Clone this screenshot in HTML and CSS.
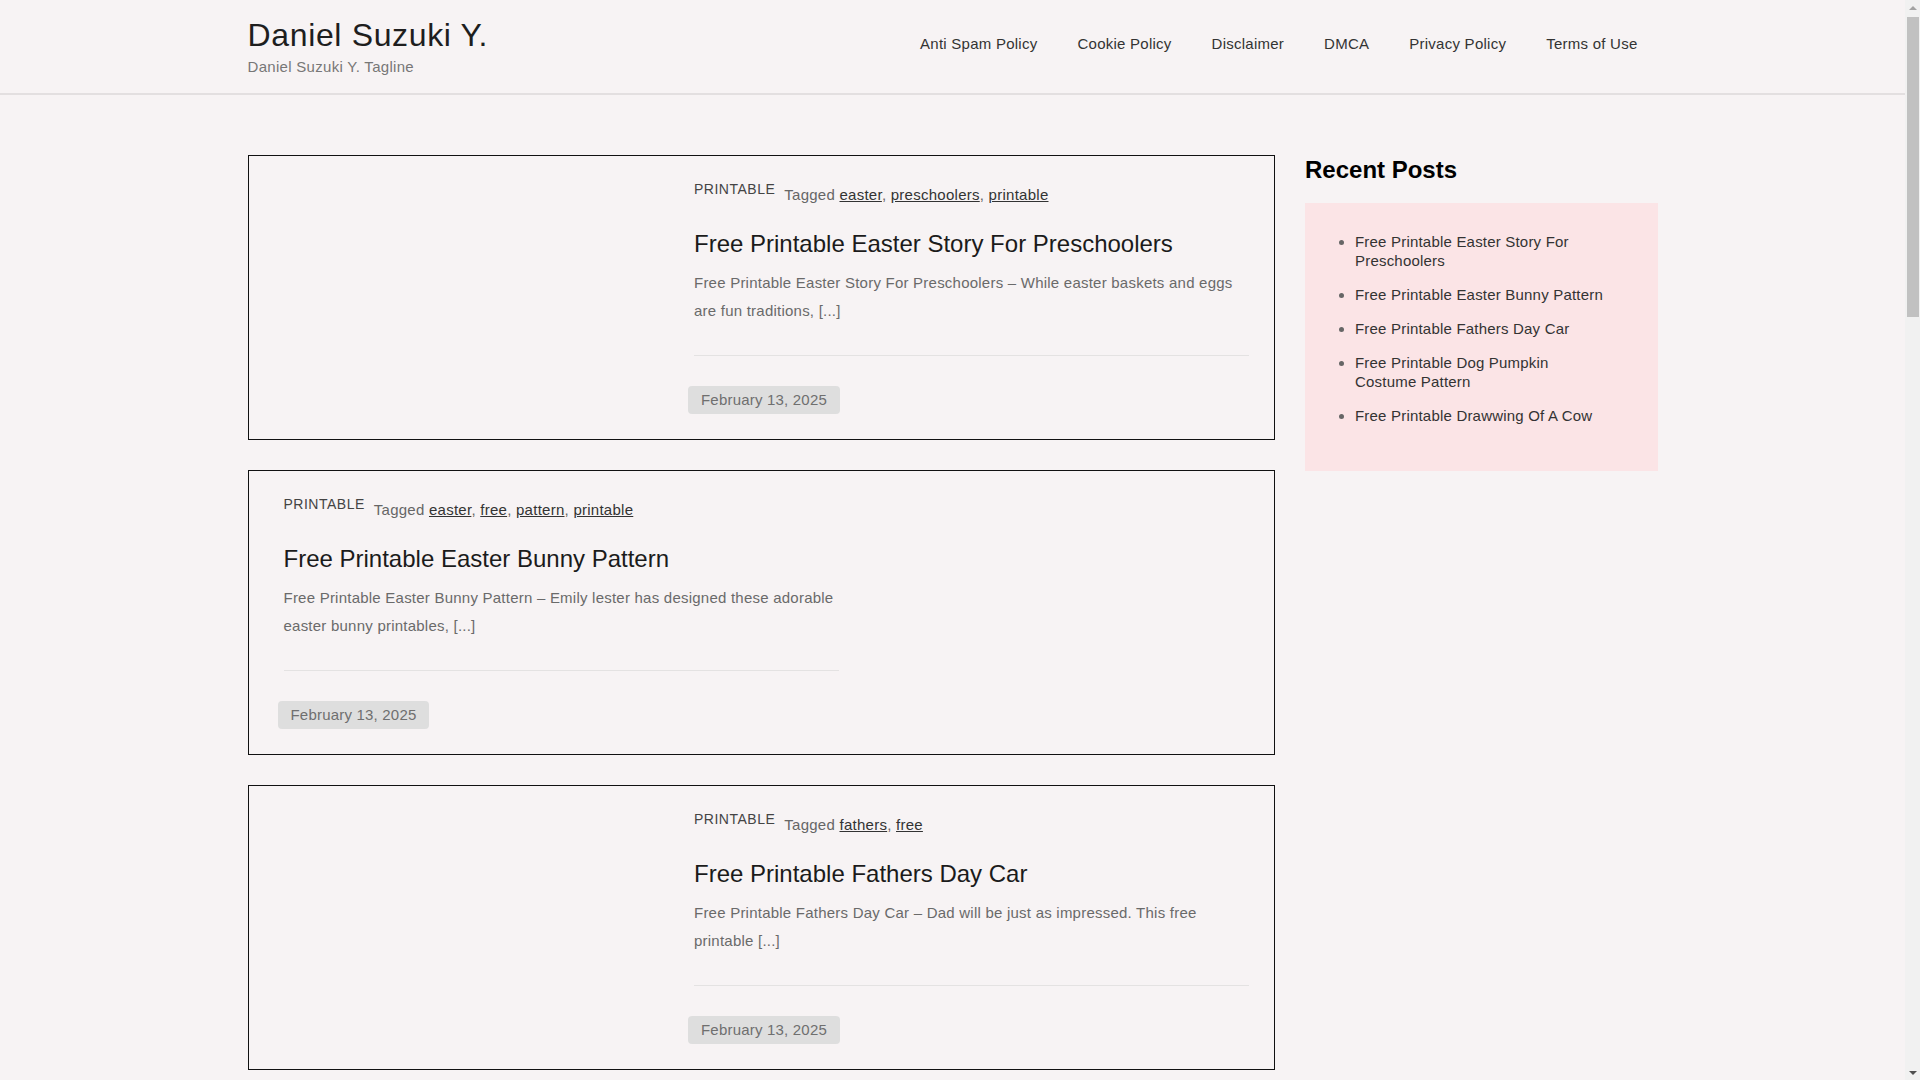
FILE: index.html
```html
<!DOCTYPE html>
<html lang="en">
<head>
    <meta charset="UTF-8">
    <meta name="viewport" content="width=device-width, initial-scale=1.0">
    <title>Daniel Suzuki Y.</title>
    <link rel="stylesheet" href="styles.css">
</head>
<body>
    <header class="site-header">
        <div class="container header-inner">
            <div class="branding">
                <a class="site-title" href="#">Daniel Suzuki Y.</a>
                <p class="site-tagline">Daniel Suzuki Y. Tagline</p>
            </div>
            <nav class="main-nav">
                <a href="#">Anti Spam Policy</a>
                <a href="#">Cookie Policy</a>
                <a href="#">Disclaimer</a>
                <a href="#">DMCA</a>
                <a href="#">Privacy Policy</a>
                <a href="#">Terms of Use</a>
            </nav>
        </div>
    </header>

    <div class="container site-content">
        <main class="posts">
            <article class="post-card">
                <div class="post-thumb"></div>
                <div class="post-body">
                    <div class="post-meta">
                        <span class="post-cat">PRINTABLE</span>
                        <span class="post-tags">Tagged <a href="#">easter</a>, <a href="#">preschoolers</a>, <a href="#">printable</a></span>
                    </div>
                    <h2 class="post-title"><a href="#">Free Printable Easter Story For Preschoolers</a></h2>
                    <p class="post-excerpt">Free Printable Easter Story For Preschoolers – While easter baskets and eggs are fun traditions, [...]</p>
                    <hr class="post-divider">
                    <span class="post-date">February 13, 2025</span>
                </div>
            </article>

            <article class="post-card flip">
                <div class="post-body">
                    <div class="post-meta">
                        <span class="post-cat">PRINTABLE</span>
                        <span class="post-tags">Tagged <a href="#">easter</a>, <a href="#">free</a>, <a href="#">pattern</a>, <a href="#">printable</a></span>
                    </div>
                    <h2 class="post-title"><a href="#">Free Printable Easter Bunny Pattern</a></h2>
                    <p class="post-excerpt">Free Printable Easter Bunny Pattern – Emily lester has designed these adorable easter bunny printables, [...]</p>
                    <hr class="post-divider">
                    <span class="post-date">February 13, 2025</span>
                </div>
                <div class="post-thumb"></div>
            </article>

            <article class="post-card">
                <div class="post-thumb"></div>
                <div class="post-body">
                    <div class="post-meta">
                        <span class="post-cat">PRINTABLE</span>
                        <span class="post-tags">Tagged <a href="#">fathers</a>, <a href="#">free</a></span>
                    </div>
                    <h2 class="post-title"><a href="#">Free Printable Fathers Day Car</a></h2>
                    <p class="post-excerpt">Free Printable Fathers Day Car – Dad will be just as impressed. This free printable [...]</p>
                    <hr class="post-divider">
                    <span class="post-date">February 13, 2025</span>
                </div>
            </article>

            <article class="post-card flip">
                <div class="post-body">
                    <div class="post-meta">
                        <span class="post-cat">PRINTABLE</span>
                        <span class="post-tags">Tagged <a href="#">costume</a>, <a href="#">free</a>, <a href="#">pattern</a></span>
                    </div>
                    <h2 class="post-title"><a href="#">Free Printable Dog Pumpkin Costume Pattern</a></h2>
                    <p class="post-excerpt">Free Printable Dog Pumpkin Costume Pattern – A cute pumpkin outfit is easy to sew for your dog, [...]</p>
                    <hr class="post-divider">
                    <span class="post-date">February 13, 2025</span>
                </div>
                <div class="post-thumb"></div>
            </article>

            <article class="post-card">
                <div class="post-thumb"></div>
                <div class="post-body">
                    <div class="post-meta">
                        <span class="post-cat">PRINTABLE</span>
                        <span class="post-tags">Tagged <a href="#">cow</a>, <a href="#">drawwing</a>, <a href="#">free</a></span>
                    </div>
                    <h2 class="post-title"><a href="#">Free Printable Drawwing Of A Cow</a></h2>
                    <p class="post-excerpt">Free Printable Drawwing Of A Cow – Kids love to color farm animals and this cow is a simple one, [...]</p>
                    <hr class="post-divider">
                    <span class="post-date">February 12, 2025</span>
                </div>
            </article>

            <div class="pagination">
                <span class="current">1</span>
                <a href="#">2</a>
                <a href="#">3</a>
                <a href="#">Next</a>
            </div>
        </main>

        <aside class="sidebar">
            <h2 class="widget-title">Recent Posts</h2>
            <div class="widget-box">
                <ul>
                    <li><a href="#">Free Printable Easter Story For Preschoolers</a></li>
                    <li><a href="#">Free Printable Easter Bunny Pattern</a></li>
                    <li><a href="#">Free Printable Fathers Day Car</a></li>
                    <li><a href="#">Free Printable Dog Pumpkin Costume Pattern</a></li>
                    <li><a href="#">Free Printable Drawwing Of A Cow</a></li>
                </ul>
            </div>
        </aside>
    </div>

    <footer class="site-footer">
        <div class="container">Copyright © 2025 Daniel Suzuki Y.</div>
    </footer>

    <!-- window scrollbar, as the browser drew it in the original -->
    <div class="scrollbar">
        <span class="sb-btn sb-up"></span>
        <span class="sb-thumb"></span>
        <span class="sb-btn sb-down"></span>
    </div>
</body>
</html>
```

FILE: styles.css
```css
body {
    margin: 0;
    padding-right: 15px;
    font-family: "Liberation Sans", Arial, sans-serif;
    font-size: 15px;
    letter-spacing: 0.2px;
    color: #333;
    background-color: #f7f3f4;
}
a {
    color: inherit;
    text-decoration: none;
}
.container {
    width: 1410px;
    margin: 0 auto;
}

/* header */
.site-header {
    border-bottom: 2px solid #e3dfe0;
}
.header-inner {
    display: flex;
    justify-content: space-between;
    padding: 16px 0 16px;
}
.site-title {
    display: block;
    font-size: 32px;
    line-height: 38px;
    letter-spacing: 0.65px;
    color: #1e1e1e;
}
.site-tagline {
    margin: 3px 0 0;
    line-height: 20px;
    letter-spacing: 0.3px;
    color: #777;
}
.main-nav {
    display: flex;
    margin-top: 14px;
    align-self: flex-start;
}
.main-nav a {
    padding: 0 20px;
    line-height: 28px;
    letter-spacing: 0.25px;
    color: #333;
}

/* layout */
.site-content {
    display: grid;
    grid-template-columns: 1fr 352.5px;
    gap: 30px;
    padding-top: 60px;
}
.posts {
    display: flex;
    flex-direction: column;
    gap: 30px;
}

/* post cards */
.post-card {
    display: grid;
    grid-template-columns: 1fr 555px;
    border: 1px solid #111;
    padding: 25px 25px 25px 35px;
}
.post-card.flip {
    grid-template-columns: 555px 1fr;
}
.post-meta {
    display: flex;
    align-items: flex-start;
}
.post-cat {
    font-size: 14px;
    line-height: 16px;
    letter-spacing: 0.5px;
    color: #444;
    margin-right: 9px;
}
.post-tags {
    line-height: 28px;
    letter-spacing: 0.26px;
    color: #666;
}
.post-tags a {
    color: #333;
    text-decoration: underline;
}
.post-title {
    margin: 19px 0 0;
    font-size: 24px;
    line-height: 32px;
    font-weight: normal;
    letter-spacing: 0;
    color: #1b1b1b;
}
.post-excerpt {
    margin: 9px 0 0;
    line-height: 28px;
    letter-spacing: 0.23px;
    color: #6a6a6a;
}
.post-divider {
    margin: 30px 0 0;
    border: none;
    border-top: 1px solid #e4e2e2;
}
.post-date {
    display: inline-block;
    margin: 30px 0 0 -6px;
    padding: 4px 13px;
    line-height: 20px;
    color: #6f6f6f;
    background: #dedede;
    border-radius: 4px;
}

.pagination {
    display: flex;
    gap: 10px;
    padding: 10px 0 40px;
}
.pagination a,
.pagination span {
    padding: 6px 12px;
    border: 1px solid #ccc;
}
.pagination .current {
    background: #dedede;
}

/* sidebar */
.widget-title {
    margin: 0 0 19px;
    font-size: 24px;
    line-height: 29px;
    font-weight: bold;
    letter-spacing: 0;
    color: #000;
}
.widget-box {
    background: #fbe4e6;
    padding: 30px 50px;
}
.widget-box ul {
    margin: 0;
    padding: 0;
}
.widget-box li {
    line-height: 18.75px;
    margin-bottom: 15.25px;
    color: #333;
}
.widget-box li::marker {
    color: #666;
}

.site-footer {
    padding: 40px 0;
    border-top: 2px solid #e3dfe0;
    color: #777;
}

/* scrollbar */
.scrollbar {
    position: fixed;
    top: 0;
    right: 0;
    bottom: 0;
    width: 15px;
    background: #f1f1f1;
    display: flex;
    flex-direction: column;
}
.sb-btn {
    height: 15px;
    display: flex;
    align-items: center;
    justify-content: center;
}
.sb-btn::before {
    content: "";
    border-left: 4px solid transparent;
    border-right: 4px solid transparent;
}
.sb-up::before {
    border-bottom: 4px solid #a3a3a3;
}
.sb-down {
    margin-top: auto;
}
.sb-down::before {
    border-top: 4px solid #505050;
}
.sb-thumb {
    height: 300px;
    margin: 2px 1px 0 2px;
    background: #c1c1c1;
}
```
